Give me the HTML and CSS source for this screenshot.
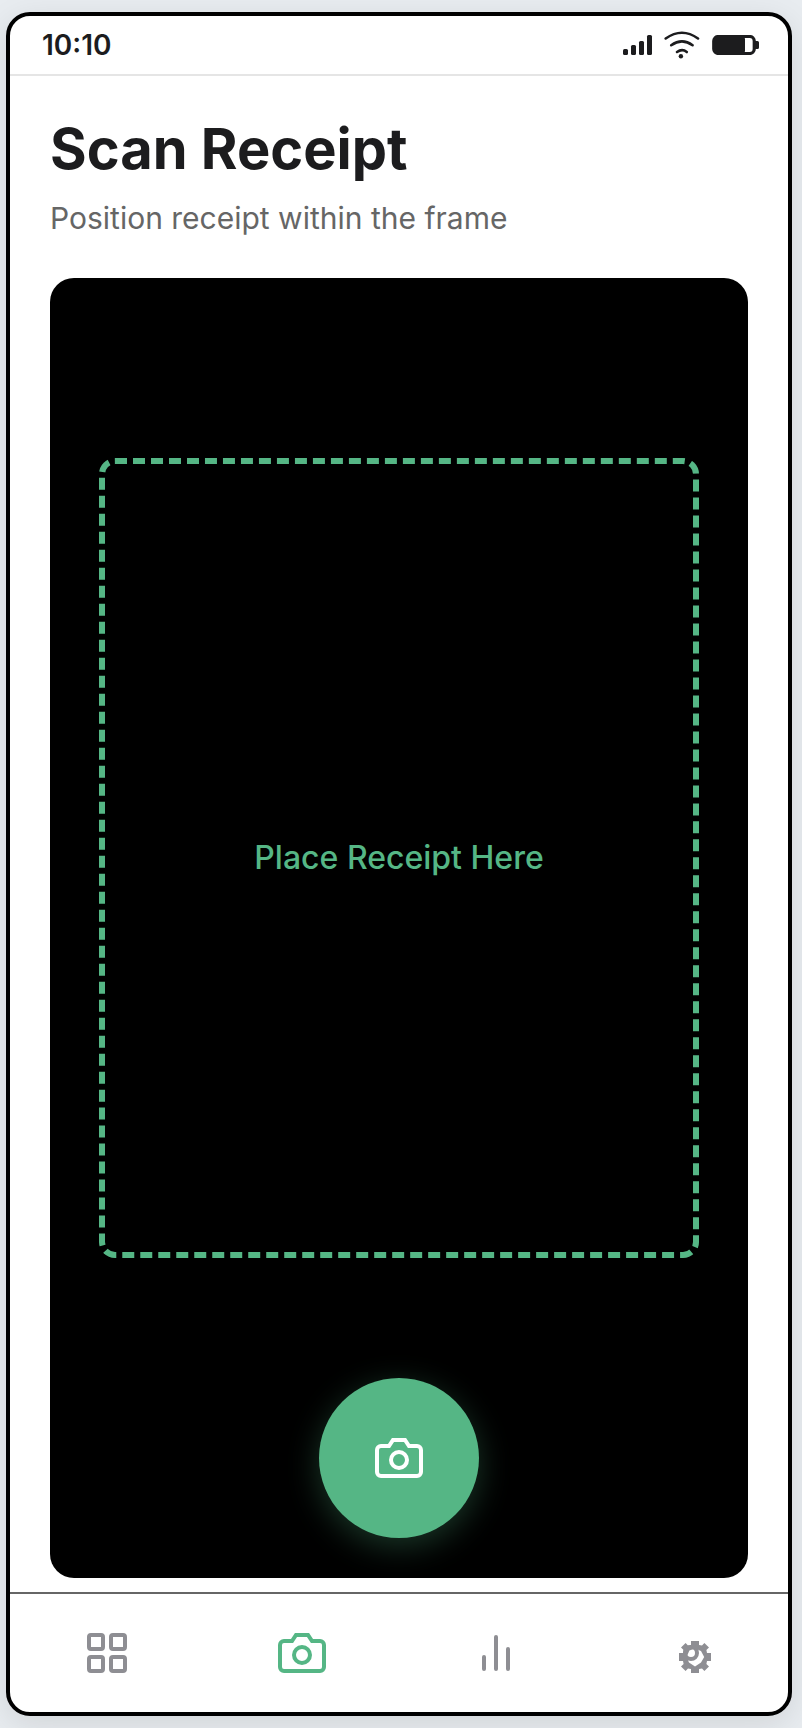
FILE: index.html
```
<!DOCTYPE html>
<html lang="en">
<head>
<meta charset="utf-8">
<title>Scan Receipt</title>
<link rel="stylesheet" href="styles.css">
</head>
<body>
<div class="phone">
  <header class="status-bar">
    <span class="time">10:10</span>
    <div class="status-icons">
      <svg class="signal" width="30" height="20" viewBox="0 0 30 20" fill="currentColor">
        <rect x="0" y="14" width="5" height="6" rx="1.5"/>
        <rect x="8" y="10" width="5" height="10" rx="1.5"/>
        <rect x="16" y="6" width="5" height="14" rx="1.5"/>
        <rect x="24" y="0" width="5" height="20" rx="1.5"/>
      </svg>
      <svg class="wifi" width="36" height="28" viewBox="0 0 36 28" fill="none" stroke="currentColor" stroke-width="2.6" stroke-linecap="round">
        <path d="M1.7 7.5Q18 -4 34 7.5"/>
        <path d="M7.2 14.2Q18 6.4 28.6 14.2"/>
        <path d="M13 21Q18.2 17.4 22.8 21"/>
        <circle cx="16.9" cy="25.2" r="2.2" fill="currentColor" stroke="none"/>
      </svg>
      <svg class="battery" width="48" height="20" viewBox="0 0 48 20" fill="currentColor">
        <rect x="1.75" y="1.5" width="40.5" height="17" rx="4.5" fill="none" stroke="currentColor" stroke-width="3.2"/>
        <rect x="2" y="2" width="31" height="16" rx="2"/>
        <path d="M43 6h2.500a1.500 1.500 0 0 1 1.500 1.500v5a1.500 1.500 0 0 1-1.500 1.500H43z"/>
      </svg>
    </div>
  </header>
  <main class="content">
    <h1 class="title">Scan Receipt</h1>
    <p class="subtitle">Position receipt within the frame</p>
    <section class="viewfinder">
      <div class="frame">Place Receipt Here</div>
      <button class="shutter" aria-label="Take photo">
        <svg class="icon" viewBox="0 0 24 24"><path d="M23 19a2 2 0 0 1-2 2H3a2 2 0 0 1-2-2V8a2 2 0 0 1 2-2h4l2-3h6l2 3h4a2 2 0 0 1 2 2z"/><circle cx="12" cy="13" r="4"/></svg>
      </button>
    </section>
  </main>
  <nav class="tab-bar">
    <a class="tab"><svg class="icon" viewBox="0 0 24 24"><rect x="3" y="3" width="7" height="7" rx="1"/><rect x="14" y="3" width="7" height="7" rx="1"/><rect x="3" y="14" width="7" height="7" rx="1"/><rect x="14" y="14" width="7" height="7" rx="1"/></svg></a>
    <a class="tab active"><svg class="icon" viewBox="0 0 24 24"><path d="M23 19a2 2 0 0 1-2 2H3a2 2 0 0 1-2-2V8a2 2 0 0 1 2-2h4l2-3h6l2 3h4a2 2 0 0 1 2 2z"/><circle cx="12" cy="13" r="4"/></svg></a>
    <a class="tab"><svg class="icon rounded" viewBox="0 0 24 24"><path d="M6 20v-6M12 20V4M18 20V10"/></svg></a>
    <a class="tab"><svg class="icon" viewBox="0 0 24 24">
      <circle cx="12" cy="12" r="3"/>
      <path class="solid" fill-rule="evenodd" transform="translate(14 14)" d="M-2-8H2V-6L3.500-5.700 4.700-7 7-4.700 5.700-3.500 6-2H8V2H6L5.700 3.500 7 4.700 4.700 7 3.500 5.700 2 6V8H-2V6L-3.500 5.700-4.700 7-7 4.700-5.700 3.500-6 2H-8V-2H-6L-5.700-3.500-7-4.700-4.700-7-3.500-5.700-2-6z M0-4.200L-2.800-3.200-4.200 0-3 2.800 0 4.800 3 2.800 4.600 0 3-3z"/>
    </svg></a>
  </nav>
</div>
</body>
</html>
```
FILE: styles.css
```
* {
  box-sizing: border-box;
}

body {
  margin: 0;
  height: 1728px;
  padding: 12px 10px 12px 6px;
  background: #e8ecf0;
  font-family: Inter, "Liberation Sans", sans-serif;
  color: #1c1c1e;
  overflow: hidden;
}

.phone {
  display: flex;
  flex-direction: column;
  width: 786px;
  height: 1704px;
  border: 4px solid #000;
  border-radius: 24px;
  background: #fff;
  box-shadow: 0 8px 32px rgba(0, 0, 0, 0.1);
  overflow: hidden;
}

.status-bar {
  display: flex;
  align-items: center;
  justify-content: space-between;
  height: 60px;
  padding: 0 28px 0 32px;
  border-bottom: 2px solid #e5e5e5;
}

.time {
  font-size: 28px;
  font-weight: 600;
}

.status-icons {
  display: flex;
  align-items: center;
}

.wifi {
  margin: 0 12px 0 11px;
}

.content {
  flex: 1;
  display: flex;
  flex-direction: column;
  padding: 39px 40px 14px;
}

.title {
  margin: 0 0 13px;
  font-size: 56px;
  line-height: 68px;
  font-weight: 700;
}

.subtitle {
  margin: 0 0 38px;
  font-size: 30px;
  line-height: 44px;
  color: #666;
}

.viewfinder {
  flex: 1;
  display: flex;
  flex-direction: column;
  align-items: center;
  justify-content: space-between;
  padding: 180px 0 40px;
  border-radius: 24px;
  background: #000;
}

.frame {
  display: flex;
  align-items: center;
  justify-content: center;
  width: 600px;
  height: 800px;
  padding-bottom: 2px;
  border: 6px dashed #55b685;
  border-radius: 16px;
  color: #55b685;
  font-size: 32px;
  font-weight: 500;
}

.shutter {
  display: flex;
  align-items: center;
  justify-content: center;
  width: 160px;
  height: 160px;
  padding: 0;
  border: 0;
  border-radius: 50%;
  background: #55b685;
  color: #fff;
  box-shadow: 0 8px 32px rgba(85, 182, 133, 0.3);
}

.icon {
  width: 48px;
  height: 48px;
  fill: none;
  stroke: currentColor;
  stroke-width: 2;
}

.rounded {
  stroke-linecap: round;
}

.solid {
  fill: currentColor;
  stroke: none;
}

.tab-bar {
  display: flex;
  height: 120px;
  border-top: 2px solid #666;
}

.tab {
  flex: 1;
  display: flex;
  align-items: center;
  justify-content: center;
  color: #8e8e93;
}

.active {
  color: #55b685;
}
```
